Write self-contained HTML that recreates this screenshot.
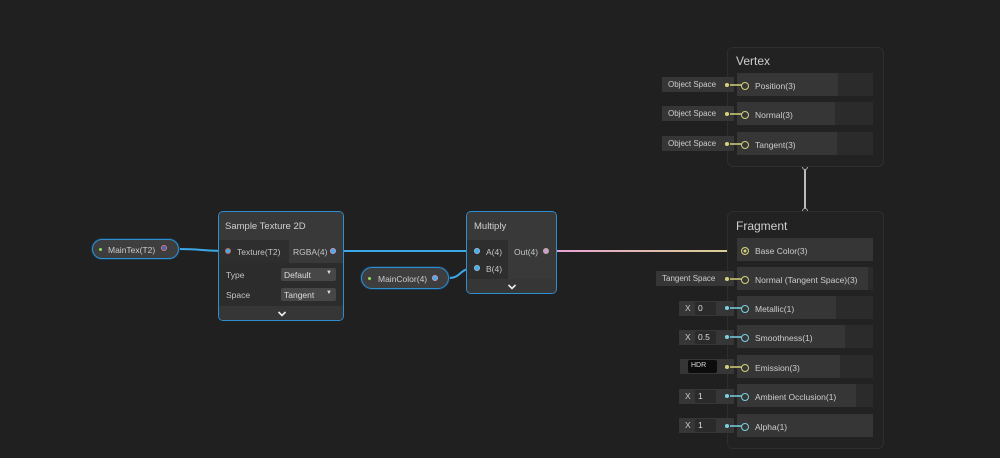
<!DOCTYPE html>
<html><head><style>
*{margin:0;padding:0;box-sizing:border-box}
body{width:1000px;height:458px;background:#202020;position:relative;overflow:hidden;font-family:"Liberation Sans",sans-serif;color:#c4c4c4;font-size:8.5px}
.a{position:absolute}
.blk{position:absolute;border:1px solid #2e2e2e;border-radius:6px;background:#222}
.ttl{position:absolute;font-size:12px;color:#cfcfcf}
.row{position:absolute;height:23px;background:#2b2b2b}
.row .l{position:absolute;left:0;top:0;bottom:0;background:#363636}
.row span{position:absolute;left:18px;top:8px;color:#cdcdcd}
.row i{position:absolute;left:4px;top:9px;width:8px;height:8px;border-radius:50%;border:1.3px solid #d4d07a}
.lab{position:absolute;height:15px;background:#363636;font-size:8px;color:#ccc;padding:3px 0 0 6px}
.xb{position:absolute;width:55px;height:15px;background:#363636;font-size:8.5px;color:#ccc}
.xb b{font-weight:normal;position:absolute;left:6px;top:2px}
.xb u{text-decoration:none;position:absolute;left:16px;top:1px;width:21px;height:13px;background:#2a2a2a;border-radius:2px;padding:1px 0 0 3px;color:#ddd}
.node{position:absolute;border:1px solid #2e8fcf;border-radius:5px;background:#2c2c2c;overflow:hidden}
.pill{position:absolute;border:1px solid #2e8fcf;border-radius:11px;background:#3e3e3e;box-shadow:0 0 0 1px #1a3a52}
.pt{position:absolute;width:7px;height:7px;border-radius:50%;background:#3ab1e8;border:1.3px solid #c66}
</style></head><body>
<svg class="a" style="left:0;top:0" width="1000" height="458">
<defs><linearGradient id="g" x1="0" x2="1"><stop offset="0" stop-color="#e8a0d8"/><stop offset="1" stop-color="#d8d48a"/></linearGradient></defs>
<path d="M179 249 C200 249 205 251 228 251" stroke="#3aa8e6" stroke-width="2" fill="none"/>
<path d="M333 251 L476 251" stroke="#3aa8e6" stroke-width="2" fill="none"/>
<path d="M449 278 C462 278 458 268 476 268" stroke="#3aa8e6" stroke-width="2" fill="none"/>
<rect x="546" y="250" width="200" height="2" fill="url(#g)"/>
<line x1="805" y1="167" x2="805" y2="211" stroke="#bbb" stroke-width="2"/>
<circle cx="805" cy="167" r="2.5" fill="#202020" stroke="#aaa"/>
<circle cx="805" cy="211" r="2.5" fill="#202020" stroke="#aaa"/>
</svg>

<!-- Vertex -->
<div class="blk" style="left:727px;top:47px;width:157px;height:120px"></div>
<div class="ttl" style="left:736px;top:54px">Vertex</div>
<div class="row" style="left:737px;top:73px;width:136px"><div class="l" style="width:101px"></div><i></i><span>Position(3)</span></div>
<div class="row" style="left:737px;top:102px;width:136px"><div class="l" style="width:98px"></div><i></i><span>Normal(3)</span></div>
<div class="row" style="left:737px;top:132px;width:136px"><div class="l" style="width:100px"></div><i></i><span>Tangent(3)</span></div>
<div class="lab" style="left:662px;top:77px;width:72px">Object Space</div>
<div class="lab" style="left:662px;top:106px;width:72px">Object Space</div>
<div class="lab" style="left:662px;top:136px;width:72px">Object Space</div>

<!-- Fragment -->
<div class="blk" style="left:727px;top:211px;width:157px;height:238px"></div>
<div class="ttl" style="left:736px;top:219px">Fragment</div>
<div class="row" style="left:737px;top:238px;width:136px"><div class="l" style="width:136px"></div><i style="background:#d4d07a;box-shadow:inset 0 0 0 1.5px #363636"></i><span>Base Color(3)</span></div>
<div class="row" style="left:737px;top:267px;width:136px"><div class="l" style="width:131px"></div><i></i><span>Normal (Tangent Space)(3)</span></div>
<div class="row" style="left:737px;top:296px;width:136px"><div class="l" style="width:99px"></div><i style="border-color:#7ad0e0"></i><span>Metallic(1)</span></div>
<div class="row" style="left:737px;top:325px;width:136px"><div class="l" style="width:108px"></div><i style="border-color:#7ad0e0"></i><span>Smoothness(1)</span></div>
<div class="row" style="left:737px;top:355px;width:136px"><div class="l" style="width:103px"></div><i></i><span>Emission(3)</span></div>
<div class="row" style="left:737px;top:384px;width:136px"><div class="l" style="width:119px"></div><i style="border-color:#7ad0e0"></i><span>Ambient Occlusion(1)</span></div>
<div class="row" style="left:737px;top:414px;width:136px"><div class="l" style="width:136px"></div><i style="border-color:#7ad0e0"></i><span>Alpha(1)</span></div>
<div class="lab" style="left:656px;top:271px;width:78px">Tangent Space</div>
<div class="xb" style="left:679px;top:301px"><b>X</b><u>0</u></div>
<div class="xb" style="left:679px;top:330px"><b>X</b><u>0.5</u></div>
<div class="xb" style="left:680px;top:359px;width:54px"><u style="left:8px;width:29px;background:#0c0c0c;font-size:7px;padding-top:2px">HDR</u></div>
<div class="xb" style="left:679px;top:389px"><b>X</b><u>1</u></div>
<div class="xb" style="left:679px;top:418px"><b>X</b><u>1</u></div>
<svg class="a" style="left:720px;top:70px" width="30" height="370">
<g stroke-width="1.5">
<g stroke="#d4d07a" fill="#d4d07a"><line x1="10" y1="15" x2="22" y2="15"/><circle cx="7" cy="15" r="1.3"/><line x1="10" y1="44" x2="22" y2="44"/><circle cx="7" cy="44" r="1.3"/><line x1="10" y1="74" x2="22" y2="74"/><circle cx="7" cy="74" r="1.3"/><line x1="10" y1="209" x2="22" y2="209"/><circle cx="7" cy="209" r="1.3"/><line x1="10" y1="297" x2="22" y2="297"/><circle cx="7" cy="297" r="1.3"/></g>
<g stroke="#7ad0e0" fill="#7ad0e0"><line x1="10" y1="238" x2="22" y2="238"/><circle cx="7" cy="238" r="1.3"/><line x1="10" y1="267" x2="22" y2="267"/><circle cx="7" cy="267" r="1.3"/><line x1="10" y1="326" x2="22" y2="326"/><circle cx="7" cy="326" r="1.3"/><line x1="10" y1="356" x2="22" y2="356"/><circle cx="7" cy="356" r="1.3"/></g>
</g></svg>

<!-- MainTex pill -->
<div class="pill" style="left:92px;top:239px;width:87px;height:20px"><div class="a" style="left:6px;top:8px;width:3px;height:3px;border-radius:50%;background:#8fe060"></div><div class="a" style="left:15px;top:5px;color:#ccc">MainTex(T2)</div><div class="pt" style="left:68px;top:5px;width:6px;height:6px;background:#46b;border-color:#d77"></div></div>

<!-- Sample Texture -->
<div class="node" style="left:218px;top:211px;width:126px;height:110px">
<div class="a" style="left:0;top:0;width:126px;height:28px;background:#393939"></div>
<div class="a" style="left:6px;top:9px;font-size:9.5px;color:#d0d0d0">Sample Texture 2D</div>
<div class="a" style="left:0;top:28px;width:70px;height:23px;background:#2e2e2e"></div>
<div class="a" style="left:70px;top:28px;width:56px;height:23px;background:#393939"></div>
<div class="pt" style="left:6px;top:36px;width:6px;height:6px"></div>
<div class="a" style="left:18px;top:35px">Texture(T2)</div>
<div class="a" style="left:74px;top:35px">RGBA(4)</div>
<div class="pt" style="left:111px;top:36px;width:6px;height:6px;border-color:#c9c"></div>
<div class="a" style="left:7px;top:58px">Type</div>
<div class="a" style="left:62px;top:56px;width:55px;height:13px;background:#474747;border-radius:2px;padding:2px 0 0 3px;color:#ddd">Default<span style="position:absolute;right:4px;top:2px;font-size:6px">▼</span></div>
<div class="a" style="left:7px;top:78px">Space</div>
<div class="a" style="left:62px;top:76px;width:55px;height:13px;background:#474747;border-radius:2px;padding:2px 0 0 3px;color:#ddd">Tangent<span style="position:absolute;right:4px;top:2px;font-size:6px">▼</span></div>
<div class="a" style="left:0;top:94px;width:126px;height:16px;background:#363636"></div>
<svg class="a" style="left:58px;top:98px" width="10" height="8"><path d="M1.5 2L5 5.5 8.5 2" stroke="#eee" stroke-width="1.6" fill="none"/></svg>
</div>

<!-- MainColor pill -->
<div class="pill" style="left:361px;top:267px;width:88px;height:22px"><div class="a" style="left:6px;top:9px;width:3px;height:3px;border-radius:50%;background:#8fe060"></div><div class="a" style="left:16px;top:6px;color:#ccc">MainColor(4)</div><div class="pt" style="left:70px;top:7px;width:6px;height:6px;border-color:#c9c"></div></div>

<!-- Multiply -->
<div class="node" style="left:466px;top:211px;width:91px;height:83px">
<div class="a" style="left:0;top:0;width:91px;height:28px;background:#393939"></div>
<div class="a" style="left:7px;top:9px;font-size:9.5px;color:#d0d0d0">Multiply</div>
<div class="a" style="left:0;top:28px;width:41px;height:39px;background:#2e2e2e"></div>
<div class="a" style="left:41px;top:28px;width:50px;height:39px;background:#393939"></div>
<div class="pt" style="left:7px;top:36px;width:6px;height:6px;border-color:#9bd"></div>
<div class="a" style="left:19px;top:35px">A(4)</div>
<div class="pt" style="left:7px;top:53px;width:6px;height:6px;border-color:#9bd"></div>
<div class="a" style="left:19px;top:52px">B(4)</div>
<div class="a" style="left:47px;top:35px">Out(4)</div>
<div class="pt" style="left:76px;top:36px;width:6px;height:6px;background:#c8a0d0;border-color:#caa"></div>
<div class="a" style="left:0;top:67px;width:91px;height:16px;background:#363636"></div>
<svg class="a" style="left:40px;top:71px" width="10" height="8"><path d="M1.5 2L5 5.5 8.5 2" stroke="#eee" stroke-width="1.6" fill="none"/></svg>
</div>
</body></html>
